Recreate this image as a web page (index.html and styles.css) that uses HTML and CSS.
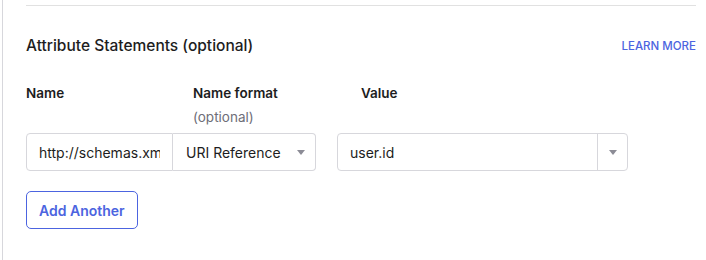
FILE: index.html
```html
<!DOCTYPE html>
<html lang="en">
<head>
    <meta charset="UTF-8">
    <title>Attribute Statements</title>
    <link rel="stylesheet" href="styles.css">
</head>
<body>
    <div class="panel">
        <div class="rule"></div>
        <div class="section-head">
            <h3>Attribute Statements (optional)</h3>
            <a class="learn" href="#">LEARN MORE</a>
        </div>
        <div class="labels">
            <div class="label">Name</div>
            <div class="label">Name format<span class="sub">(optional)</span></div>
            <div class="label">Value</div>
        </div>
        <div class="row">
            <div class="pair">
                <input class="name-input" type="text" value="http://schemas.xmlsoap.org/ws/2005/05/identity/claims/nameidentifier">
                <div class="select">
                    <span>URI Reference</span>
                    <span class="caret"></span>
                </div>
            </div>
            <div class="combo">
                <span class="combo-text">user.id</span>
                <span class="combo-btn"><span class="caret"></span></span>
            </div>
        </div>
        <button class="add-btn" type="button">Add Another</button>
    </div>
</body>
</html>
```

FILE: styles.css
```css
body {
    margin: 0;
    background: #fff;
    font-family: 'Inter', 'Noto Sans', sans-serif;
    color: #1d1d21;
}
.panel {
    margin-left: 2px;
    border-left: 1px solid #d7d7dc;
    padding: 5px 10px 0 23px;
    height: 255px;
}
.rule {
    border-top: 1px solid #e1e1e1;
}
.section-head {
    display: flex;
    justify-content: space-between;
    align-items: center;
    margin-top: 30px;
}
h3 {
    margin: 0;
    font-size: 15.5px;
    font-weight: 500;
    line-height: 20px;
}
.learn {
    font-size: 11.5px;
    font-weight: 500;
    color: #4c64e0;
    text-decoration: none;
    line-height: 14px;
}
.labels {
    display: grid;
    grid-template-columns: 167px 168px auto;
    margin-top: 28px;
}
.label {
    font-size: 13.5px;
    font-weight: 600;
    line-height: 18px;
}
.sub {
    display: block;
    font-weight: 400;
    color: #6e6e78;
    margin-top: 6px;
}
.row {
    display: flex;
    gap: 21px;
    margin-top: 7px;
}
.pair {
    display: flex;
}
.name-input,
.select,
.combo {
    box-sizing: border-box;
    height: 38px;
    border: 1px solid #d7d7dc;
    font-family: inherit;
    font-size: 14px;
    color: #1d1d21;
}
.name-input {
    width: 147px;
    padding: 0 12px;
    border-radius: 4px 0 0 4px;
    outline: none;
}
.select {
    width: 143px;
    border-left: none;
    border-radius: 0 4px 4px 0;
    display: flex;
    align-items: center;
    justify-content: space-between;
    padding: 0 10px 0 13px;
}
.caret {
    width: 0;
    height: 0;
    border-left: 4px solid transparent;
    border-right: 4px solid transparent;
    border-top: 5px solid #8c8c96;
}
.combo {
    width: 291px;
    border-radius: 4px;
    display: flex;
    align-items: stretch;
}
.combo-text {
    flex: 1;
    display: flex;
    align-items: center;
    padding-left: 12px;
}
.combo-btn {
    width: 29px;
    border-left: 1px solid #d7d7dc;
    display: flex;
    align-items: center;
    justify-content: center;
}
.add-btn {
    display: block;
    margin-top: 20px;
    height: 38px;
    padding: 0 12px;
    background: #fff;
    border: 1px solid #4c64e0;
    border-radius: 5px;
    color: #4c64e0;
    font-family: inherit;
    font-size: 14px;
    font-weight: 600;
    cursor: pointer;
}
```
